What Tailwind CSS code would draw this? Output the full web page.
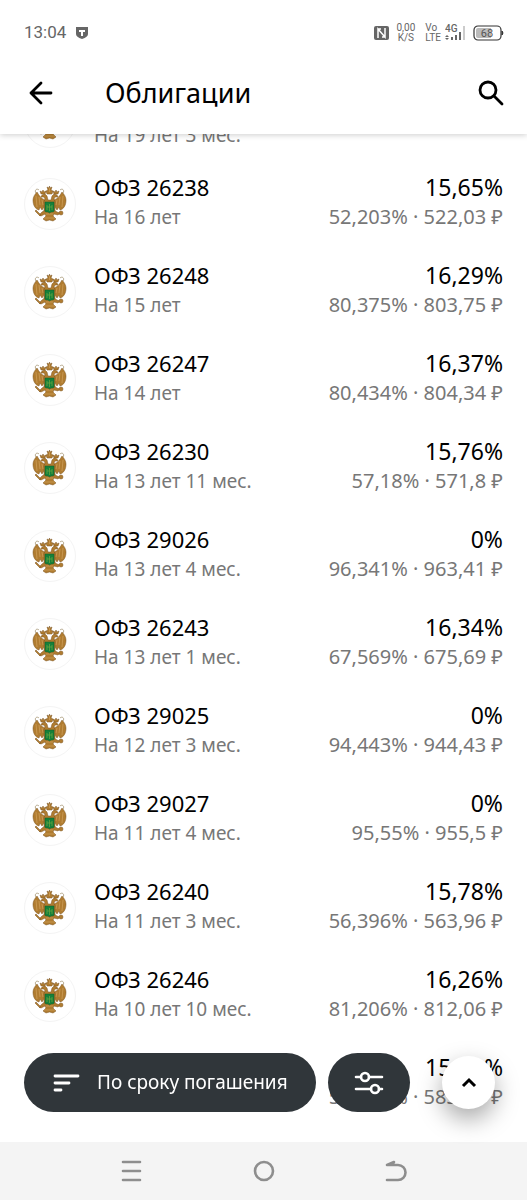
<!DOCTYPE html>
<html lang="ru">
<head>
<meta charset="utf-8">
<meta name="viewport" content="width=device-width, initial-scale=1">
<title>Облигации</title>
<script src="https://cdn.jsdelivr.net/npm/@tailwindcss/browser@4"></script>
</head>
<body class="bg-white font-['Noto_Sans',sans-serif] text-black">
<svg class="hidden" aria-hidden="true">
  <symbol id="eagle" viewBox="0 0 36 38">
    <g fill="#b07c30" stroke="#7d5420" stroke-width=".5" stroke-linejoin="round">
      <path d="M13 15C10 14 7 11 5 7C3 9 1 12 1 15C1 20 3 24 7 25L8 22L10 25L12 22L14 24Z"/>
      <path d="M22 15C25 14 28 11 30 7C32 9 34 12 34 15C34 20 32 24 28 25L27 22L25 25L23 22L21 24Z"/>
      <path d="M13 25L10 27L7 30L9 31L13 29L14 31L11 34L14 36L17.500 35L21 36L24 34L21 31L22 29L26 30L28 28L25 27L22 25Z"/>
      <path d="M12 17L13 14L12 12L9 12L10 10L13 9L15 11L16 15H19L20 11L22 9L25 10L26 12L23 12L22 14L23 17V26H12Z"/>
      <path d="M16 5L15 2L17 3L17.500 1L18 3L20 2L19 5L21 6L20 9H15L14 6Z"/>
      <path d="M9 9L8 6L10 7L11 5L12 7L14 6L13 9ZM22 9L21 6L23 7L24 5L25 7L27 6L26 9Z"/>
      <path d="M4 25L9 30L8 31L3 26ZM29 26a2 2 0 1 1 0 4a2 2 0 1 1 0-4Z"/>
    </g>
    <g fill="none" stroke="#d6a865" stroke-width=".6">
      <path d="M4 11L5 22M7 12L8 20M10 15L11 20M31 11L30 22M28 12L27 20M25 15L24 20M12 33h11M14 29h7M17.500 3v4"/>
    </g>
    <path d="M4 8C2 5 5 3 7 5M31 8C33 5 30 3 28 5" fill="none" stroke="#b5a88c"/>
    <path d="M13 17h9v9q0 1-2 1h-1l-1.500 1l-1.500-1h-1q-2 0-2-1Z" fill="#16803a" stroke="#0c5c2a" stroke-width=".5"/>
    <path d="M15 20v5M17.500 19v7M20 20v5M15 22h5" fill="none" stroke="#68a33f" stroke-width=".8"/>
  </symbol>
</svg>
<div class="flex h-screen flex-col overflow-hidden">
  <header class="relative z-10 shrink-0 bg-white pb-3 shadow-[0_1px_6px_rgba(0,0,0,0.2)]">
    <div class="flex h-16 items-center justify-between pl-6 pr-[26px] pt-0.5 font-['Roboto',sans-serif] text-[#666]">
      <div class="flex items-center gap-2.5">
        <span class="text-[17px]">13:04</span>
        <svg class="h-3 w-3" viewBox="0 0 12 12"><path d="M0 0h12v7q0 3-6 5Q0 10 0 7Z" fill="#666"/><path d="M3 3h6v2H7v4H5V5H3Z" fill="#fff"/></svg>
      </div>
      <div class="flex items-center">
        <svg class="h-3.5 w-4" viewBox="0 0 16 14" fill="none"><rect width="15" height="14" rx="2" fill="#666"/><path d="M4 12V3L11 11V2M4 3H7M8 11h3" stroke="#fff" stroke-width="1.500"/></svg>
        <div class="ml-1.5 text-center text-[10px] leading-[10px]">0,00<br>K/S</div>
        <div class="ml-2.5 text-[10px] leading-[10px]">Vo<br>LTE</div>
        <svg class="ml-1 h-5 w-[22px]" viewBox="0 0 22 20"><text x="0" y="9" font-size="10" font-weight="500" fill="#666">4G</text><path d="M0 14l2-2l2 2ZM0 15l2 2l2-2ZM6 14h2v3H6ZM10 12h2v5h-2ZM14 9h2v8h-2Z" fill="#666"/><path d="M18 3h2v14h-2Z" fill="#ccc"/></svg>
        <svg class="ml-1.5 -mr-1 h-4 w-8" viewBox="0 0 32 16"><rect x="1" y="1" width="27" height="14" rx="4" fill="#fff" stroke="#333" stroke-width="1.200"/><path d="M5 3h13v10H5q-2 0-2-2V5q0-2 2-2Z" fill="#bbb"/><path d="M29 6q2 2 0 4Z" fill="#333" stroke="#333"/><text x="14" y="12" font-size="11" fill="#555" text-anchor="middle">68</text></svg>
      </div>
    </div>
    <div class="flex h-[58px] items-center px-6">
      <button aria-label="Назад" class="w-[81px] shrink-0"><svg class="ml-1 h-8 w-8" viewBox="0 0 32 32" fill="none" stroke="#000" stroke-width="2.800" stroke-linecap="round" stroke-linejoin="round"><path d="M23 16H3M13 6L3 16L13 26"/></svg></button>
      <h1 class="flex-1 text-[27px] leading-8">Облигации</h1>
      <button aria-label="Поиск" class="-mr-0.5"><svg class="h-7 w-7" viewBox="0 0 28 28" fill="none" stroke="#000" stroke-width="2.800"><circle cx="11" cy="11" r="8"/><path d="M17 17l8 8" stroke-linecap="round"/></svg></button>
    </div>
  </header>
  <main class="min-h-0 flex-1 overflow-hidden">
    <ul id="bonds" class="-mt-16"></ul>
  </main>
  <nav class="relative z-10 flex h-[58px] shrink-0 items-center justify-center gap-[104px] bg-[#f4f4f4]">
    <button aria-label="Недавние"><svg class="h-7 w-7" viewBox="0 0 28 28" fill="none" stroke="#8e8e8e" stroke-width="2.600" stroke-linecap="round"><path d="M5 5h17M5 14h17M5 23h17"/></svg></button>
    <button aria-label="Домой"><svg class="h-7 w-7" viewBox="0 0 28 28" fill="none" stroke="#8e8e8e" stroke-width="2.600"><circle cx="14" cy="14" r="9"/></svg></button>
    <button aria-label="Назад в системе"><svg class="h-7 w-7" viewBox="0 0 28 28" fill="none" stroke="#8e8e8e" stroke-width="2.600" stroke-linecap="round" stroke-linejoin="round"><path d="M5 23h11a7 7 0 0 0 0-15H5L12 5"/><path d="M5 8L12 5V8Z" fill="#8e8e8e" stroke-width="1"/></svg></button>
  </nav>
</div>
<div class="fixed inset-x-0 bottom-[88px] z-20 flex items-center px-6">
  <button class="flex h-[59px] items-center gap-4 rounded-full bg-[#30363a] pl-[29px] pr-7 text-[19px] text-white">
    <svg class="h-5 w-7" viewBox="0 0 28 20" fill="none" stroke="#fff" stroke-width="2.800" stroke-linecap="round"><path d="M2 3h23M2 10h14M2 17h6"/></svg>
    По сроку погашения
  </button>
  <button aria-label="Фильтры" class="ml-3 flex h-[59px] w-[82px] items-center justify-center rounded-full bg-[#30363a]"><svg class="h-6 w-8" viewBox="0 0 32 24" fill="none" stroke="#fff" stroke-width="2.600" stroke-linecap="round"><path d="M3 6h5M16 6h13M3 18h15M26 18h3"/><circle cx="12" cy="6" r="4"/><circle cx="22" cy="18" r="4"/></svg></button>
  <button aria-label="Наверх" class="ml-auto mr-2 flex h-[53px] w-[53px] items-center justify-center rounded-full bg-white shadow-[0_10px_24px_rgba(0,0,0,0.35)]"><svg class="h-5 w-5" viewBox="0 0 20 20" fill="none" stroke="#000" stroke-width="3"><path d="M4 13l6-6l6 6"/></svg></button>
</div>
<script>
const bonds = [
  ["", "На 19 лет 3 мес.", "", ""],
  ["ОФЗ 26238", "На 16 лет", "15,65%", "52,203% · 522,03 ₽"],
  ["ОФЗ 26248", "На 15 лет", "16,29%", "80,375% · 803,75 ₽"],
  ["ОФЗ 26247", "На 14 лет", "16,37%", "80,434% · 804,34 ₽"],
  ["ОФЗ 26230", "На 13 лет 11 мес.", "15,76%", "57,18% · 571,8 ₽"],
  ["ОФЗ 29026", "На 13 лет 4 мес.", "0%", "96,341% · 963,41 ₽"],
  ["ОФЗ 26243", "На 13 лет 1 мес.", "16,34%", "67,569% · 675,69 ₽"],
  ["ОФЗ 29025", "На 12 лет 3 мес.", "0%", "94,443% · 944,43 ₽"],
  ["ОФЗ 29027", "На 11 лет 4 мес.", "0%", "95,55% · 955,5 ₽"],
  ["ОФЗ 26240", "На 11 лет 3 мес.", "15,78%", "56,396% · 563,96 ₽"],
  ["ОФЗ 26246", "На 10 лет 10 мес.", "16,26%", "81,206% · 812,06 ₽"],
  ["", "", "15,71%", "58,396% · 583,96 ₽"]
];
document.getElementById("bonds").innerHTML = bonds.map(([name, term, rate, price]) => `
  <li class="flex h-[88px] items-center px-6 first:pt-3">
    ${term ? `<div class="mt-1 flex h-[52px] w-[52px] shrink-0 items-center justify-center rounded-full border border-[#f4f4f4]"><svg class="h-[38px] w-9"><use href="#eagle"/></svg></div>` : ""}
    <div class="ml-[18px] flex-1">
      <div class="h-[30px] text-[22px] leading-[30px]">${name}</div>
      <div class="h-[30px] text-[19px] leading-[30px] text-[#777]">${term}</div>
    </div>
    <div class="text-right">
      <div class="h-[30px] text-[23px] leading-[30px]">${rate}</div>
      <div class="h-[30px] text-[20px] leading-[30px] text-[#777]">${price}</div>
    </div>
  </li>`).join("");
</script>
</body>
</html>
